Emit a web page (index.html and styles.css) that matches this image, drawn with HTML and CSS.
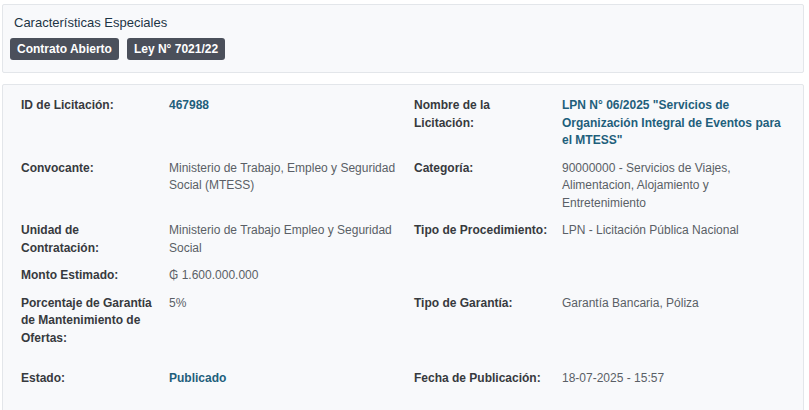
FILE: index.html
```html
<!DOCTYPE html>
<html lang="es">
<head>
<meta charset="utf-8">
<title>Licitación</title>
<link rel="stylesheet" href="styles.css">
</head>
<body>
<div class="page">
  <section class="card features">
    <h2 class="features-title">Características Especiales</h2>
    <div class="badges">
      <span class="badge">Contrato Abierto</span>
      <span class="badge">Ley N° 7021/22</span>
    </div>
  </section>

  <section class="card details">
    <div class="grid">
      <div class="label">ID de Licitación:</div>
      <div class="value link">467988</div>
      <div class="label">Nombre de la Licitación:</div>
      <div class="value link">LPN N° 06/2025 "Servicios de Organización Integral de Eventos para el MTESS"</div>

      <div class="label">Convocante:</div>
      <div class="value">Ministerio de Trabajo, Empleo y Seguridad Social (MTESS)</div>
      <div class="label">Categoría:</div>
      <div class="value">90000000 - Servicios de Viajes, Alimentacion, Alojamiento y Entretenimiento</div>

      <div class="label">Unidad de Contratación:</div>
      <div class="value">Ministerio de Trabajo Empleo y Seguridad Social</div>
      <div class="label">Tipo de Procedimiento:</div>
      <div class="value">LPN - Licitación Pública Nacional</div>

      <div class="label">Monto Estimado:</div>
      <div class="value">₲ 1.600.000.000</div>
      <div class="label"></div>
      <div class="value"></div>

      <div class="label">Porcentaje de Garantía de Mantenimiento de Ofertas:</div>
      <div class="value">5%</div>
      <div class="label">Tipo de Garantía:</div>
      <div class="value">Garantía Bancaria, Póliza</div>

      <div class="label last">Estado:</div>
      <div class="value link last">Publicado</div>
      <div class="label last">Fecha de Publicación:</div>
      <div class="value last">18-07-2025 - 15:57</div>
    </div>
  </section>
</div>
</body>
</html>
```

FILE: styles.css
```css
* {
  box-sizing: border-box;
}

html, body {
  margin: 0;
  padding: 0;
  background: #ffffff;
  font-family: "Liberation Sans", Arial, sans-serif;
  overflow: hidden;
}

.page {
  margin: 4px 5px 0 2px;
  display: flex;
  flex-direction: column;
  gap: 11px;
}

.card {
  background: #f8f9fb;
  border: 1px solid #e3e6ea;
  border-radius: 2px;
}

.features {
  padding: 9px 7px 10px 7px;
  height: 69px;
}

.features-title {
  margin: 0 0 0 4px;
  font-size: 13px;
  line-height: 18px;
  font-weight: normal;
  color: #1c3445;
}

.badges {
  display: flex;
  gap: 8px;
  margin-top: 6px;
}

.badge {
  display: inline-block;
  background: #4b505b;
  color: #ffffff;
  font-size: 12px;
  font-weight: bold;
  line-height: 22px;
  height: 22px;
  padding: 0 7px;
  border-radius: 3px;
}

.details {
  padding: 12px 10px 40px 18px;
  min-height: 330px;
}

.grid {
  display: grid;
  grid-template-columns: 148px 245px 148px 232px;
  row-gap: 10px;
  font-size: 12px;
  line-height: 17.5px;
}

.label {
  font-weight: bold;
  color: #373a3e;
  padding-right: 12px;
}

.value {
  color: #5a5f66;
  padding-right: 14px;
}

.value:nth-child(4n) {
  padding-right: 0;
}

.value.link {
  color: #1f5f7b;
  font-weight: bold;
}

.last {
  margin-top: 12.5px;
}
```
